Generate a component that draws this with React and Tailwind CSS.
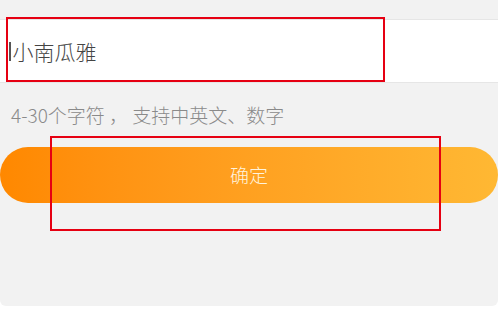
import React from 'react';

const font = { fontFamily: '"Noto Sans CJK SC", "Noto Sans", sans-serif' };

const App = () => {
  return (
    <div className="w-[498px] h-[314px] bg-white overflow-hidden" style={font}>
      <div className="relative h-[306px] bg-[#f2f2f2] rounded-b-[6px] pt-[19px]">
        {/* nickname input */}
        <div className="h-[64px] bg-white border-y border-[#e6e6e6] flex items-center pl-[9px]">
          <span className="w-[1.5px] h-[19px] bg-[#555] mr-[2px]"></span>
          <span className="text-[21px] leading-none font-light text-[#444]">小南瓜雅</span>
        </div>

        <p className="mt-[19px] pl-[11px] text-[19px] leading-[26px] font-light text-[#8a8a8a] whitespace-pre">
          {'4-30个字符 ， 支持中英文、数字'}
        </p>

        <div className="mt-[19px]">
          <button className="w-full h-[56px] rounded-full bg-gradient-to-r from-[#ff8800] to-[#ffb833] text-[19px] leading-none font-light text-[#fff3dc] pb-[2px]">
            确定
          </button>
        </div>

        {/* annotation boxes */}
        <div className="absolute left-[6px] top-[17px] w-[379px] h-[65px] border-2 border-[#e60012]"></div>
        <div className="absolute left-[50px] top-[136px] w-[391px] h-[95px] border-2 border-[#e60012]"></div>
      </div>
    </div>
  );
};

export default App;
